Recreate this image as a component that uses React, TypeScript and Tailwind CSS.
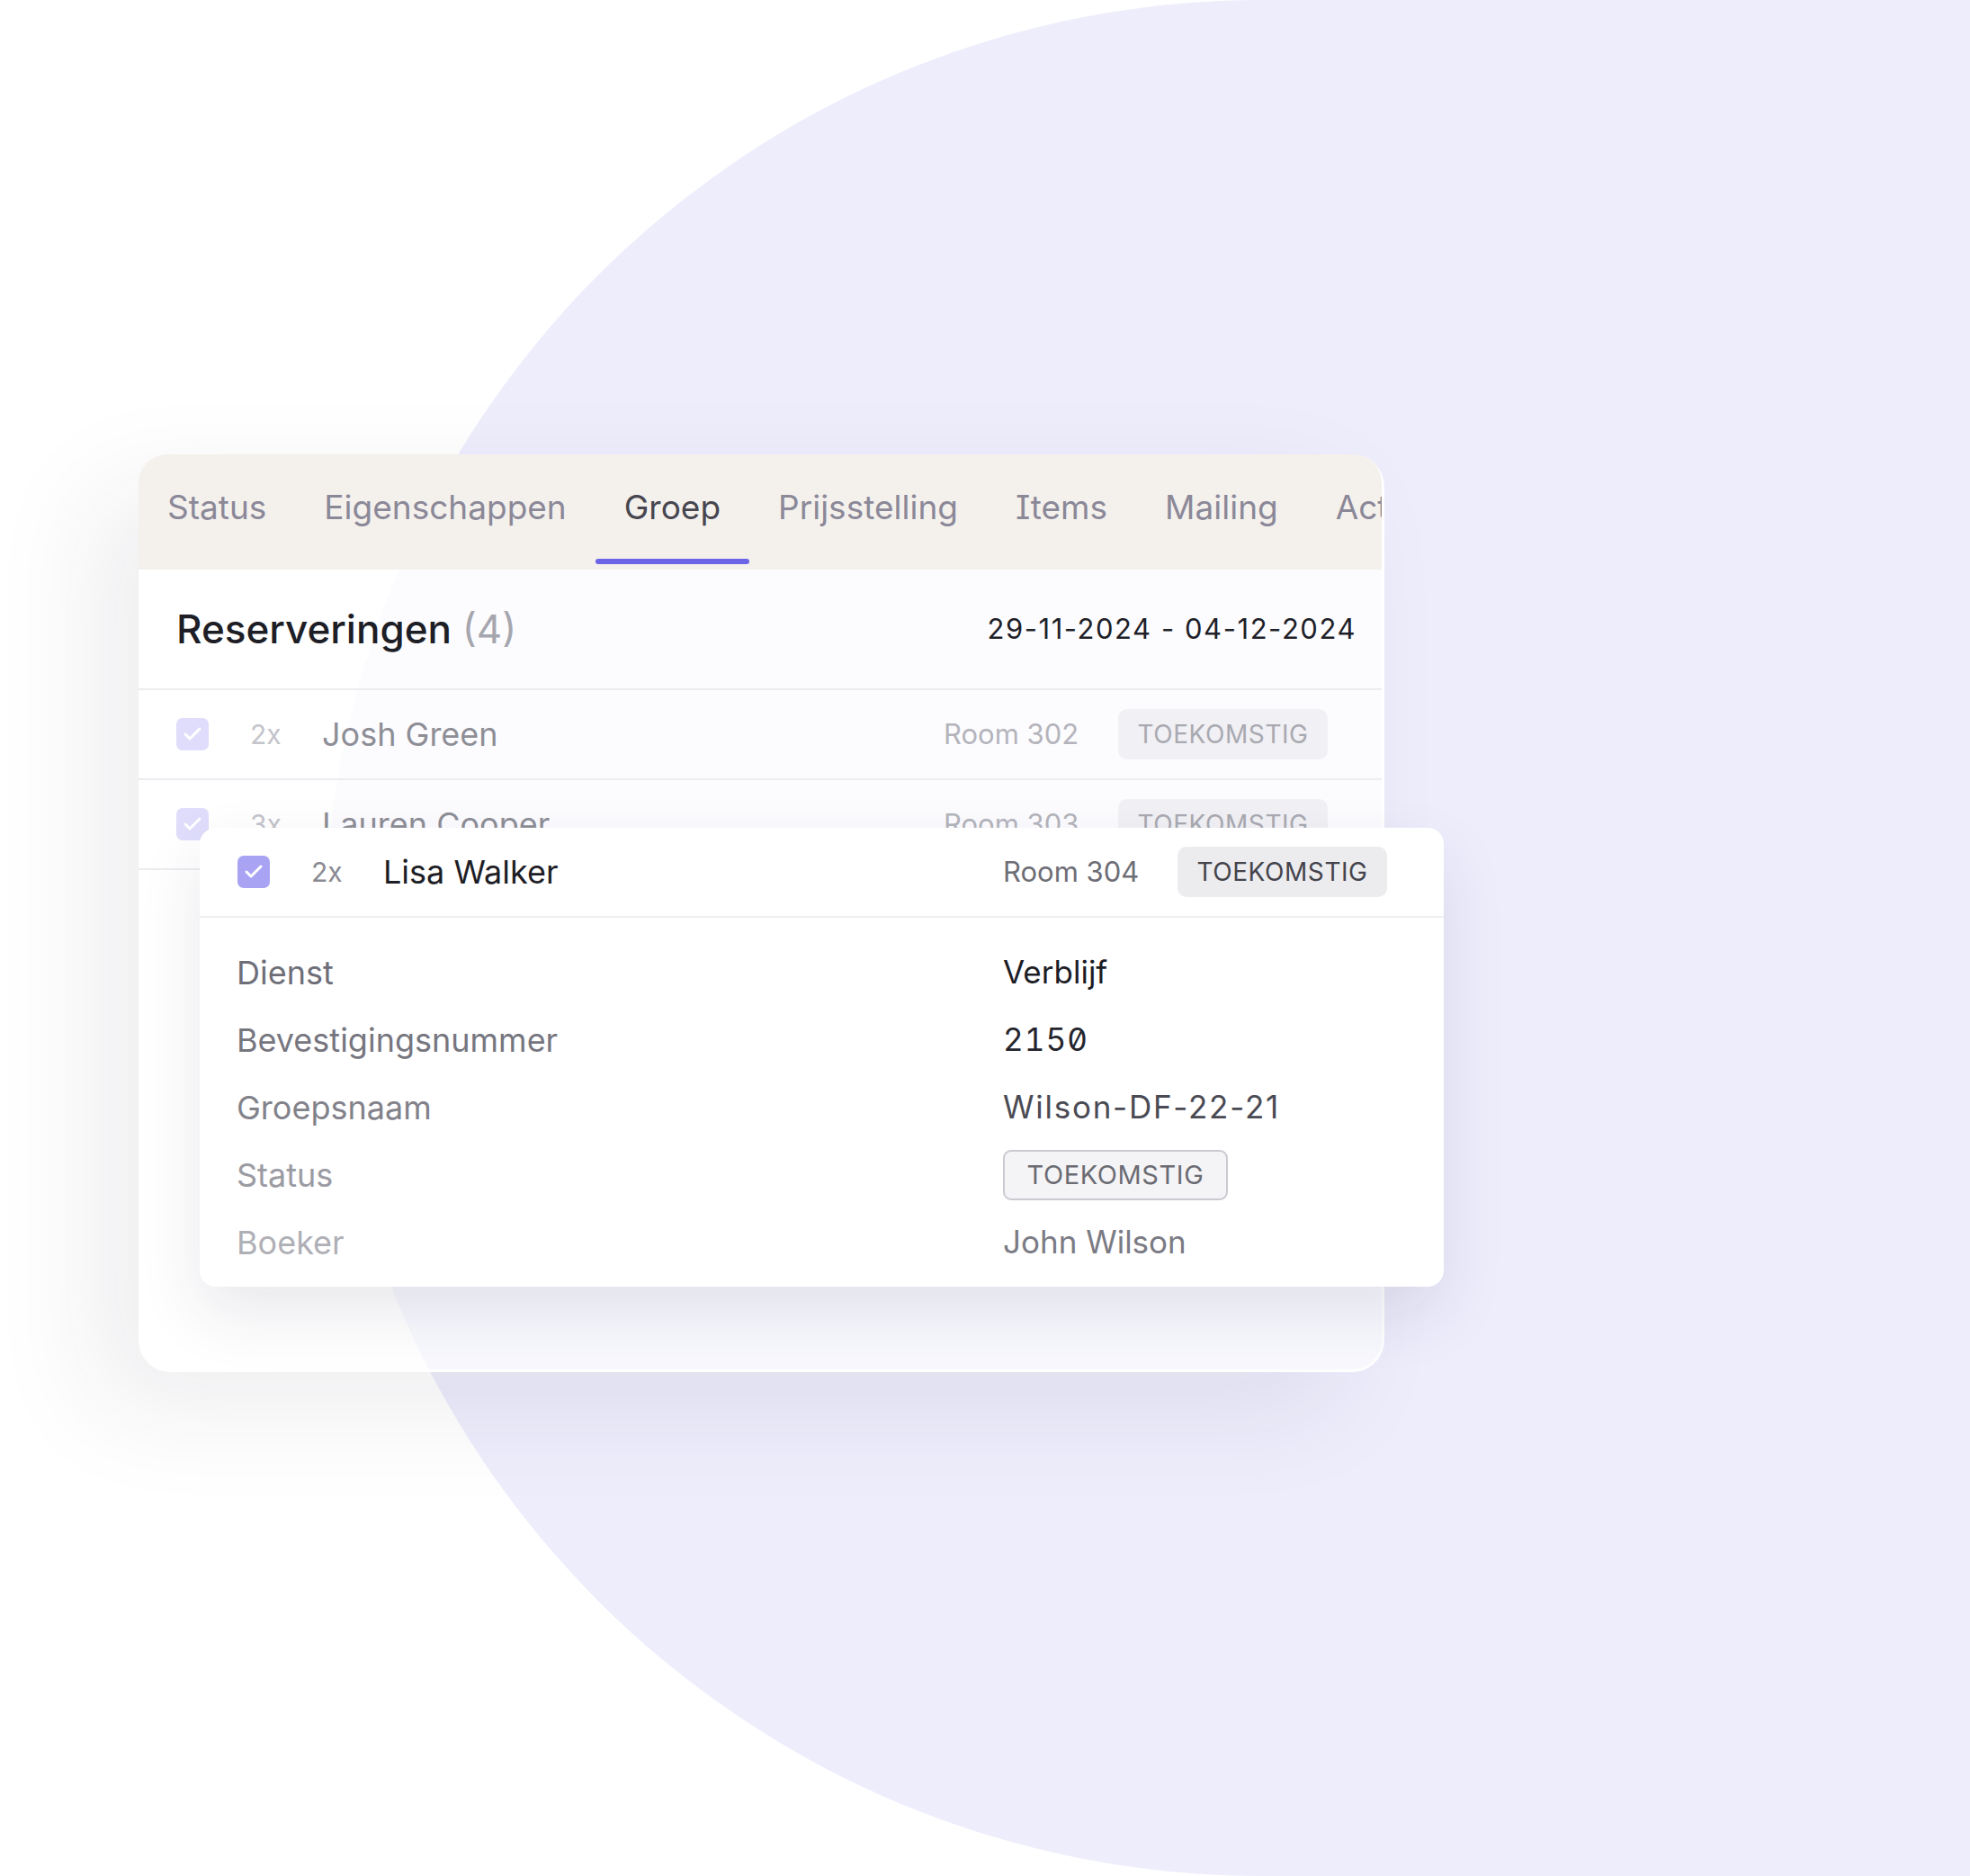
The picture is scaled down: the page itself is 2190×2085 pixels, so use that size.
import { Check } from 'lucide-react';

const font = { fontFamily: 'Inter, "Noto Sans", sans-serif' };

const tabs = ['Status', 'Eigenschappen', 'Groep', 'Prijsstelling', 'Items', 'Mailing', 'Activiteiten'];

type RowProps = {
  qty: string;
  name: string;
  room: string;
  active?: boolean;
};

function Checkbox({ active }: { active?: boolean }) {
  return (
    <div
      className={`flex h-[36px] w-[36px] shrink-0 items-center justify-center rounded-[7px] ${
        active ? 'bg-[#a8a4f3]' : 'bg-[#dfddfb]'
      }`}
    >
      <Check size={24} strokeWidth={3} className="text-white" />
    </div>
  );
}

function Badge({ active }: { active?: boolean }) {
  return (
    <div
      className={`flex h-[56px] w-[233px] shrink-0 items-center justify-center rounded-[10px] text-[28px] tracking-[0.02em] ${
        active ? 'bg-[#ececef] text-[#44444c]' : 'bg-[#f1f0f4] text-[#a9a9b1]'
      }`}
    >
      TOEKOMSTIG
    </div>
  );
}

function ReservationRow({ qty, name, room, active }: RowProps) {
  return (
    <div className={`flex h-[98px] items-center pl-[42px] ${active ? 'pr-[63px]' : 'pr-[60px]'}`}>
      <Checkbox active={active} />
      <span className={`ml-[46px] w-[80px] text-[30px] ${active ? 'text-[#8a8a92]' : 'text-[#c4c4cb]'}`}>{qty}</span>
      <span className={`flex-1 text-[36px] ${active ? 'text-[#1e1e26]' : 'text-[#8e8e96]'}`}>{name}</span>
      <span className={`w-[194px] text-[31px] ${active ? 'text-[#6e6e76]' : 'text-[#b4b4bb]'}`}>{room}</span>
      <Badge active={active} />
    </div>
  );
}

const details = [
  { label: 'Dienst', labelColor: 'text-[#6e6e78]', value: 'Verblijf', valueColor: 'text-[#1d1d26]' },
  { label: 'Bevestigingsnummer', labelColor: 'text-[#76767f]', value: '2150', valueColor: 'text-[#25252e] tracking-[0.03em]' },
  { label: 'Groepsnaam', labelColor: 'text-[#82828b]', value: 'Wilson-DF-22-21', valueColor: 'text-[#4a4a54] tracking-[0.05em]' },
  { label: 'Status', labelColor: 'text-[#9b9ba3]', value: null, valueColor: '' },
  { label: 'Boeker', labelColor: 'text-[#afafb6]', value: 'John Wilson', valueColor: 'text-[#7b7b84]' },
];

export default function App() {
  return (
    <div className="relative h-[2085px] w-[2190px] overflow-hidden bg-white" style={font}>
      {/* backdrop shape */}
      <div className="absolute left-[360px] top-0 h-[2085px] w-[3000px] rounded-[1043px] bg-[#eeedfc]" />

      <div className="relative pl-[154px] pt-[505px]">
        <div className="relative h-[1020px] w-[1385px] rounded-[36px] border-r-[3px] border-b-[3px] border-white/90 bg-white/60 shadow-[-50px_40px_120px_rgba(40,40,70,0.08)]">
          {/* tabs */}
          <div className="flex h-[128px] overflow-hidden rounded-t-[32px] bg-[#f3efeb]/90" style={{ fontFeatureSettings: '"cv08"' }}>
            {tabs.map((t) => (
              <div key={t} className="flex shrink-0 flex-col pt-[37px]">
                <span
                  className={`px-[32px] text-[37px] leading-[44px] whitespace-nowrap ${
                    t === 'Groep' ? 'text-[#47464f]' : 'text-[#8b8898]'
                  }`}
                >
                  {t}
                </span>
                <div className={`mt-[35px] h-[6px] w-full rounded-full ${t === 'Groep' ? 'bg-[#6c64e6]' : ''}`} />
              </div>
            ))}
          </div>

          {/* header */}
          <div className="flex h-[134px] items-center justify-between border-b-2 border-[#ececf1] bg-white/60 pl-[42px] pr-[28px]">
            <div className="text-[44px] font-medium text-[#1e1e26]">
              Reserveringen <span className="font-normal text-[#a6a6ae]">(4)</span>
            </div>
            <div className="text-[31px] tracking-[0.05em] text-[#1f1f28]">29-11-2024 - 04-12-2024</div>
          </div>

          <div className="border-b-2 border-[#ececf1] bg-white/50">
            <ReservationRow qty="2x" name="Josh Green" room="Room 302" />
          </div>
          <div className="border-b-2 border-[#ececf1] bg-white/50">
            <ReservationRow qty="3x" name="Lauren Cooper" room="Room 303" />
          </div>

          {/* expanded reservation */}
          <div className="absolute left-[68px] top-[415px] w-[1383px] rounded-[18px] bg-white shadow-[0_30px_70px_rgba(40,40,80,0.10)]">
            <div className="border-b-2 border-[#efeff2]">
              <ReservationRow qty="2x" name="Lisa Walker" room="Room 304" active />
            </div>
            <div className="grid grid-cols-[852px_1fr] pb-[12px] pl-[41px] pt-[23px]">
              {details.map((d) => (
                <div key={d.label} className="contents">
                  <div className={`flex h-[75px] items-center text-[36px] ${d.labelColor}`}>{d.label}</div>
                  <div className="flex h-[75px] items-center">
                    {d.value ? (
                      <span
                        className={`text-[35px] ${d.valueColor}`}
                        style={d.value === '2150' ? { fontFeatureSettings: '"tnum", "zero"' } : undefined}
                      >
                        {d.value}
                      </span>
                    ) : (
                      <span className="flex h-[56px] w-[250px] items-center justify-center rounded-[9px] border-2 border-[#cacad0] bg-[#f4f4f6] text-[29px] tracking-[0.02em] text-[#6b6b73]">
                        TOEKOMSTIG
                      </span>
                    )}
                  </div>
                </div>
              ))}
            </div>
          </div>
        </div>
      </div>
    </div>
  );
}
